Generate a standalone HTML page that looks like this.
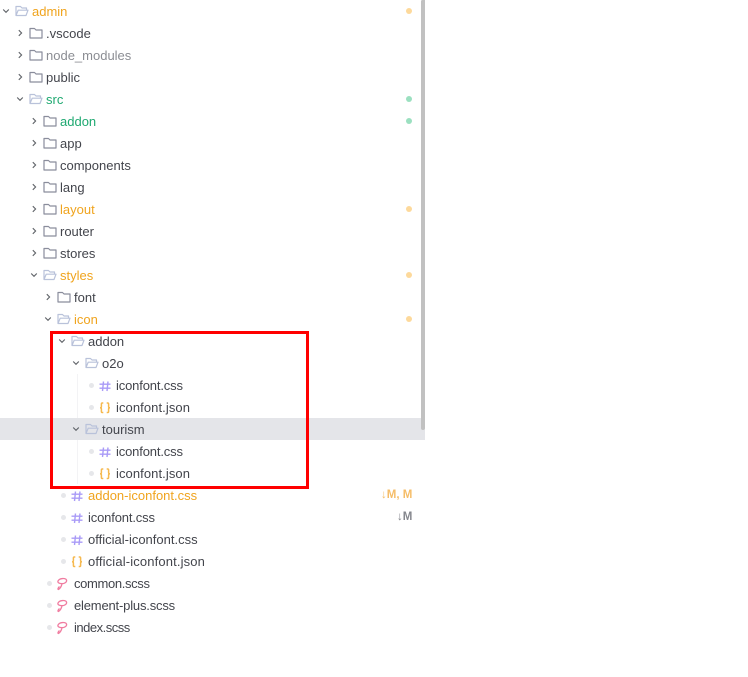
<!DOCTYPE html>
<html>
<head>
<meta charset="utf-8">
<style>
html,body{margin:0;padding:0;background:#fff;width:748px;height:677px;overflow:hidden}
body{position:relative;font-family:"Liberation Sans",sans-serif;font-size:13px;color:#43454c}
.r{position:absolute;left:0;width:425px;height:22px;line-height:22px}
.r span{position:absolute;top:1px;white-space:nowrap}
.r svg{position:absolute;top:0}
.o{color:#f0a41e}.g{color:#1fa971}.m{color:#8b8d93}
.d{position:absolute;left:406px;top:8px;width:6px;height:6px;border-radius:50%}
.do{background:#fdd99b}.dg{background:#9be0c0}
.b{position:absolute;top:8.5px;width:5px;height:5px;border-radius:50%;background:#e6e7ea}
#sel{position:absolute;left:0;top:418px;width:425px;height:22px;background:#e4e5e9}
#sb{position:absolute;left:421px;top:0;width:4px;height:430px;background:#c1c1c1;border-radius:2px 0 3px 3px}
#red{position:absolute;left:50px;top:331px;width:253px;height:152px;border:3px solid #f00;z-index:5;box-sizing:content-box}
.gl{position:absolute;width:1px;background:#f3f3f5}
.r span.st{font-size:11.500px;font-weight:bold;top:0}
.ic{letter-spacing:-.15px}
.ij{letter-spacing:.08px}
</style>
</head>
<body>
<svg width="0" height="0" style="position:absolute">
<defs>
<symbol id="co" viewBox="0 0 10 22"><path d="M2.200 9.500L5 12.300L7.800 9.500" fill="none" stroke="#5f6368" stroke-width="1.100"/></symbol>
<symbol id="cc" viewBox="0 0 10 22"><path d="M3.800 8.200L6.600 11L3.800 13.800" fill="none" stroke="#5f6368" stroke-width="1.100"/></symbol>
<symbol id="fc" viewBox="0 0 14 22"><path d="M1 6.500H5.500L7 8H13V16H1Z" fill="none" stroke="#8a8d9c" stroke-width="1.200" stroke-linejoin="round"/></symbol>
<symbol id="fo" viewBox="0 0 14 22"><path d="M1 15.500V6.500H5.500L7 8H11.500V10.200M1 15.500H11L13 10.200H3.200L1 15.500Z" fill="none" stroke="#b9c2da" stroke-width="1.200" stroke-linejoin="round"/></symbol>
<symbol id="fh" viewBox="0 0 14 22"><path d="M4.500 7.500L3.500 17M9 7.500L8 17M.5 10.200H11.500M.5 14.200H11.500" fill="none" stroke="#a99bf7" stroke-width="1.400"/></symbol>
<symbol id="fj" viewBox="0 0 14 22"><path d="M4.300 7H3.200Q2.400 7 2.400 8V10.600Q2.400 11.800 1 11.800Q2.400 11.800 2.400 13V15.500Q2.400 16.500 3.200 16.500H4.300M7.700 7H8.800Q9.600 7 9.600 8V10.600Q9.600 11.800 11 11.800Q9.600 11.800 9.600 13V15.500Q9.600 16.500 8.800 16.500H7.700" fill="none" stroke="#f6b94f" stroke-width="1.500"/></symbol>
<symbol id="fs" viewBox="0 0 14 22"><path d="M11.500 8C10.500 5.800 4.500 6 3 9C2.300 11 5 11.700 7 11.700C9.500 11.700 12.200 10 11.500 8M7 11.700C6.500 14 5 16.500 3.500 17.500C2.500 17.500 3 15.500 4.500 14.500" fill="none" stroke="#f07ca0" stroke-width="1.300"/></symbol>
</defs>
</svg>
<div id="sel"></div>
<div class="gl" style="left:77px;top:374px;height:44px"></div>
<div class="gl" style="left:77px;top:440px;height:44px"></div>
<div id="sb"></div>
<div class="r" style="top:0"><svg style="left:1px" width="10" height="22"><use href="#co"/></svg><svg style="left:15px" width="14" height="22"><use href="#fo"/></svg><span class="o" style="left:32px">admin</span><i class="d do"></i></div>
<div class="r" style="top:22px"><svg style="left:15px" width="10" height="22"><use href="#cc"/></svg><svg style="left:29px" width="14" height="22"><use href="#fc"/></svg><span style="left:46px">.vscode</span></div>
<div class="r" style="top:44px"><svg style="left:15px" width="10" height="22"><use href="#cc"/></svg><svg style="left:29px" width="14" height="22"><use href="#fc"/></svg><span class="m" style="left:46px">node_modules</span></div>
<div class="r" style="top:66px"><svg style="left:15px" width="10" height="22"><use href="#cc"/></svg><svg style="left:29px" width="14" height="22"><use href="#fc"/></svg><span style="left:46px">public</span></div>
<div class="r" style="top:88px"><svg style="left:15px" width="10" height="22"><use href="#co"/></svg><svg style="left:29px" width="14" height="22"><use href="#fo"/></svg><span class="g" style="left:46px">src</span><i class="d dg"></i></div>
<div class="r" style="top:110px"><svg style="left:29px" width="10" height="22"><use href="#cc"/></svg><svg style="left:43px" width="14" height="22"><use href="#fc"/></svg><span class="g" style="left:60px">addon</span><i class="d dg"></i></div>
<div class="r" style="top:132px"><svg style="left:29px" width="10" height="22"><use href="#cc"/></svg><svg style="left:43px" width="14" height="22"><use href="#fc"/></svg><span style="left:60px">app</span></div>
<div class="r" style="top:154px"><svg style="left:29px" width="10" height="22"><use href="#cc"/></svg><svg style="left:43px" width="14" height="22"><use href="#fc"/></svg><span style="left:60px">components</span></div>
<div class="r" style="top:176px"><svg style="left:29px" width="10" height="22"><use href="#cc"/></svg><svg style="left:43px" width="14" height="22"><use href="#fc"/></svg><span style="left:60px">lang</span></div>
<div class="r" style="top:198px"><svg style="left:29px" width="10" height="22"><use href="#cc"/></svg><svg style="left:43px" width="14" height="22"><use href="#fc"/></svg><span class="o" style="left:60px">layout</span><i class="d do"></i></div>
<div class="r" style="top:220px"><svg style="left:29px" width="10" height="22"><use href="#cc"/></svg><svg style="left:43px" width="14" height="22"><use href="#fc"/></svg><span style="left:60px">router</span></div>
<div class="r" style="top:242px"><svg style="left:29px" width="10" height="22"><use href="#cc"/></svg><svg style="left:43px" width="14" height="22"><use href="#fc"/></svg><span style="left:60px">stores</span></div>
<div class="r" style="top:264px"><svg style="left:29px" width="10" height="22"><use href="#co"/></svg><svg style="left:43px" width="14" height="22"><use href="#fo"/></svg><span class="o" style="left:60px">styles</span><i class="d do"></i></div>
<div class="r" style="top:286px"><svg style="left:43px" width="10" height="22"><use href="#cc"/></svg><svg style="left:57px" width="14" height="22"><use href="#fc"/></svg><span style="left:74px">font</span></div>
<div class="r" style="top:308px"><svg style="left:43px" width="10" height="22"><use href="#co"/></svg><svg style="left:57px" width="14" height="22"><use href="#fo"/></svg><span class="o" style="left:74px">icon</span><i class="d do"></i></div>
<div class="r" style="top:330px"><svg style="left:57px" width="10" height="22"><use href="#co"/></svg><svg style="left:71px" width="14" height="22"><use href="#fo"/></svg><span style="left:88px">addon</span></div>
<div class="r" style="top:352px"><svg style="left:71px" width="10" height="22"><use href="#co"/></svg><svg style="left:85px" width="14" height="22"><use href="#fo"/></svg><span style="left:102px">o2o</span></div>
<div class="r" style="top:374px"><i class="b" style="left:88.500px"></i><svg style="left:99px" width="14" height="22"><use href="#fh"/></svg><span class="ic" style="left:116px">iconfont.css</span></div>
<div class="r" style="top:396px"><i class="b" style="left:88.500px"></i><svg style="left:99px" width="14" height="22"><use href="#fj"/></svg><span class="ij" style="left:116px">iconfont.json</span></div>
<div class="r" style="top:418px"><svg style="left:71px" width="10" height="22"><use href="#co"/></svg><svg style="left:85px" width="14" height="22"><use href="#fo"/></svg><span style="left:102px">tourism</span></div>
<div class="r" style="top:440px"><i class="b" style="left:88.500px"></i><svg style="left:99px" width="14" height="22"><use href="#fh"/></svg><span class="ic" style="left:116px">iconfont.css</span></div>
<div class="r" style="top:462px"><i class="b" style="left:88.500px"></i><svg style="left:99px" width="14" height="22"><use href="#fj"/></svg><span class="ij" style="left:116px">iconfont.json</span></div>
<div class="r" style="top:484px"><i class="b" style="left:60.500px"></i><svg style="left:71px" width="14" height="22"><use href="#fh"/></svg><span class="o" style="left:88px">addon-iconfont.css</span><span class="st" style="left:381px;color:#f5bd68">↓M, M</span></div>
<div class="r" style="top:506px"><i class="b" style="left:60.500px"></i><svg style="left:71px" width="14" height="22"><use href="#fh"/></svg><span class="ic" style="left:88px">iconfont.css</span><span class="st" style="left:397px;color:#85878d">↓M</span></div>
<div class="r" style="top:528px"><i class="b" style="left:60.500px"></i><svg style="left:71px" width="14" height="22"><use href="#fh"/></svg><span style="left:88px">official-iconfont.css</span></div>
<div class="r" style="top:550px"><i class="b" style="left:60.500px"></i><svg style="left:71px" width="14" height="22"><use href="#fj"/></svg><span style="left:88px;letter-spacing:.14px">official-iconfont.json</span></div>
<div class="r" style="top:572px"><i class="b" style="left:46.500px"></i><svg style="left:55px" width="14" height="22"><use href="#fs"/></svg><span style="left:74px;letter-spacing:-.35px">common.scss</span></div>
<div class="r" style="top:594px"><i class="b" style="left:46.500px"></i><svg style="left:55px" width="14" height="22"><use href="#fs"/></svg><span style="left:74px;letter-spacing:-.18px">element-plus.scss</span></div>
<div class="r" style="top:616px"><i class="b" style="left:46.500px"></i><svg style="left:55px" width="14" height="22"><use href="#fs"/></svg><span style="left:74px;letter-spacing:-.5px">index.scss</span></div>
<div id="red"></div>
</body>
</html>
